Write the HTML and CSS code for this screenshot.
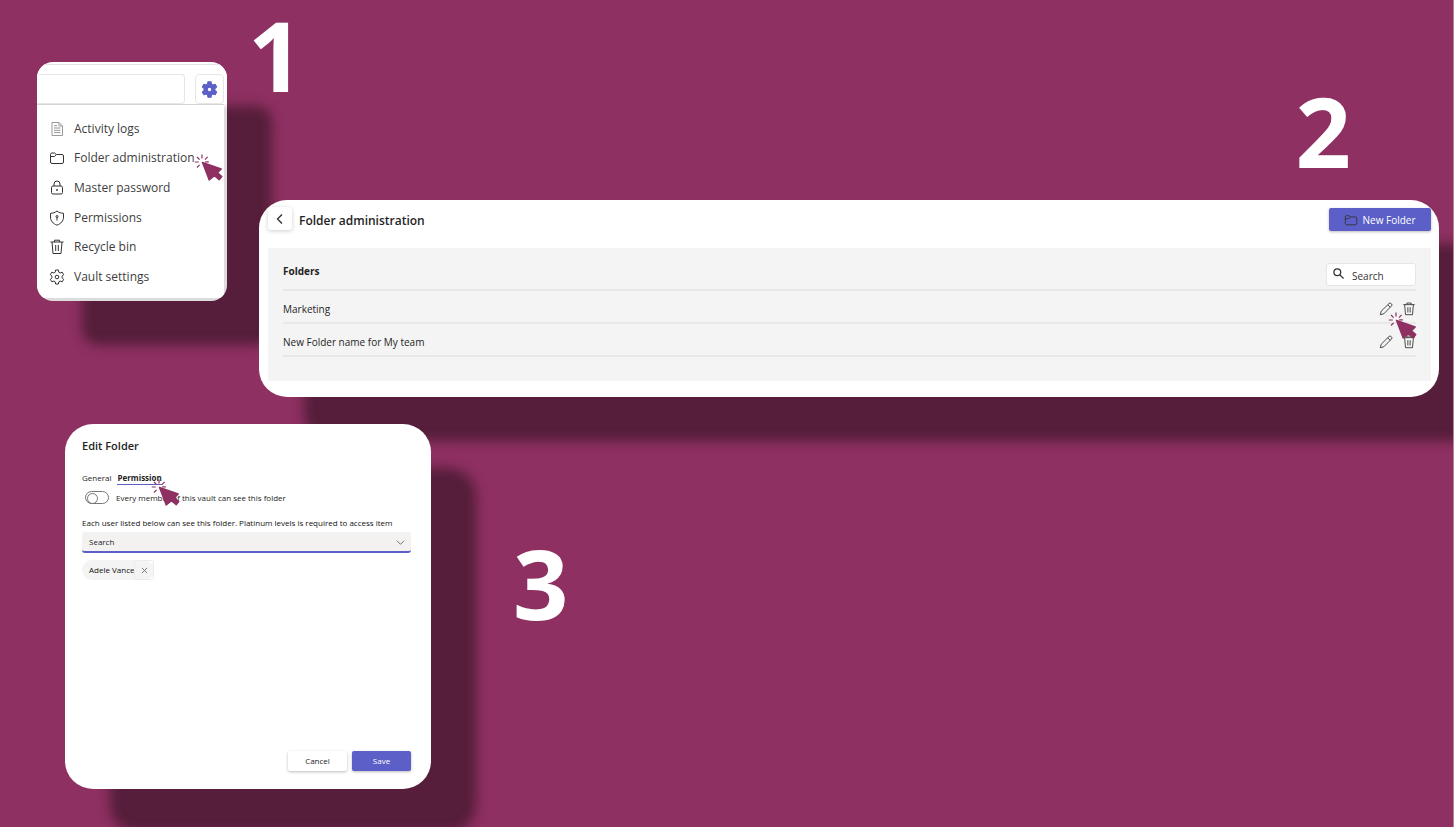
FILE: index.html
```html
<!DOCTYPE html>
<html lang="en">
<head>
<meta charset="utf-8">
<title>Folder administration</title>
<link rel="stylesheet" href="styles.css">
</head>
<body>
<svg class="sprite" aria-hidden="true">
  <symbol id="cursor" viewBox="0 0 30 30">
    <path d="M8 .5v4M3 3l2.600 2.600M.8 8h4M3 13.500l2.600-2.600M13.600 2.800 11 5.600M11.200 7.800h3.600" fill="none" stroke="#8e3062" stroke-width="1.200"/>
    <path d="M8.500 8.500 27.200 15 23.500 18.700 27.800 22.600 25.200 25.800 20.500 21.800 15.200 26Z" fill="#8e3062" stroke="#8e3062" stroke-width="1.400" stroke-linejoin="round"/>
  </symbol>
  <symbol id="folder" viewBox="0 0 16 16">
    <path d="M1.500 4.500A1.500 1.500 0 0 1 3 3h2.600l1.700 1.500h5.700A1.500 1.500 0 0 1 14.500 6v6a1.500 1.500 0 0 1-1.500 1.500H3A1.500 1.500 0 0 1 1.500 12ZM1.500 6.500h4l1.800-2"/>
  </symbol>
  <symbol id="trash" viewBox="0 0 16 16">
    <path d="M1.500 3h13M3 3l1 11.500h8L13 3M5.500 3V1.200h5V3M6.700 6v6M9.300 6v6"/>
  </symbol>
  <symbol id="pencil" viewBox="0 0 16 16">
    <path d="M1.500 14.500l1-4L11.500 1.700a1.600 1.600 0 0 1 2.300 0l.5.500a1.600 1.600 0 0 1 0 2.300L5.500 13.500ZM10 3.200l2.800 2.800"/>
  </symbol>
</svg>
<main class="poster">
  <section class="top">
    <div class="card menu-card">
      <div class="toolbar">
        <input class="toolbar-field" type="text" aria-label="Find">
        <button class="gear" type="button" aria-label="Settings">
          <svg viewBox="0 0 16 16"><path fill="#5b5fc7" stroke="#5b5fc7" stroke-width="1" stroke-linejoin="round" fill-rule="evenodd" d="M6.500.800h3l.4 2.200 1.300.8 2.100-.8 1.500 2.600-1.700 1.500v1.800l1.700 1.500-1.500 2.600-2.100-.8-1.300.8-.4 2.200h-3L6.100 13l-1.300-.8-2.100.8-1.500-2.600 1.700-1.500V7.100L1.200 5.600 2.700 3l2.100.8L6.100 3ZM8 5.900a2.100 2.100 0 1 0 0 4.200 2.100 2.100 0 0 0 0-4.200Z"/></svg>
        </button>
      </div>
      <ul class="menu">
        <li><a href="#logs"><svg class="icon faint" viewBox="0 0 16 16"><path d="M3 1.500h7l3.500 3.500v9.500H3ZM10 1.500V5h3.500M5 7h6.500M5 9.300h6.500M5 11.600h6.500M5 4.700h3"/></svg>Activity logs</a></li>
        <li><a href="#folders"><svg class="icon"><use href="#folder"/></svg>Folder administration</a><svg class="cursor"><use href="#cursor"/></svg></li>
        <li><a href="#password"><svg class="icon" viewBox="0 0 16 16"><path d="M4 6h8a1.500 1.500 0 0 1 1.500 1.500v5A1.500 1.500 0 0 1 12 14H4a1.500 1.500 0 0 1-1.500-1.500v-5A1.500 1.500 0 0 1 4 6ZM5 6V4a3 3 0 0 1 6 0v2"/><circle cx="8" cy="10" r=".6"/></svg>Master password</a></li>
        <li><a href="#permissions"><svg class="icon" viewBox="0 0 16 16"><path d="M8 1C6 2.600 4 3.200 1.500 3.300V7c0 4 2.500 6.600 6.500 8.200 4-1.600 6.500-4.200 6.500-8.200V3.300C12 3.200 10 2.600 8 1ZM8 7v3.500"/><circle cx="8" cy="6.500" r="1"/></svg>Permissions</a></li>
        <li><a href="#bin"><svg class="icon"><use href="#trash"/></svg>Recycle bin</a></li>
        <li><a href="#settings"><svg class="icon" viewBox="0 0 16 16"><path d="M6.600 1h2.800l.4 2.200 1.300.8 2.100-.8 1.500 2.500L13 7.200v1.600l1.700 1.500-1.500 2.500-2.100-.8-1.300.8-.4 2.200H6.600l-.4-2.200-1.300-.8-2.100.8-1.500-2.500L3 8.800V7.200L1.300 5.700l1.500-2.500 2.100.8 1.300-.8Z"/><circle cx="8" cy="8" r="1.800"/></svg>Vault settings</a></li>
      </ul>
    </div>
    <div class="top-right">
      <div class="numbers"><span class="number">1</span><span class="number second">2</span></div>
      <div class="card folder-card">
        <header class="folder-head">
          <button class="back" type="button" aria-label="Back"><svg viewBox="0 0 12 12"><path d="M8 1.500 3.500 6 8 10.500"/></svg></button>
          <h1>Folder administration</h1>
          <button class="btn primary new-folder" type="button"><svg><use href="#folder"/></svg>New Folder</button>
        </header>
        <div class="folder-body">
          <div class="list-head">
            <h2>Folders</h2>
            <label class="search"><svg viewBox="0 0 12 12"><circle cx="4.700" cy="4.700" r="3.700"/><path d="m7.500 7.500 4 4"/></svg><input type="text" placeholder="Search" aria-label="Search"></label>
          </div>
          <table>
            <tbody>
              <tr><td>Marketing</td><td class="actions"><div class="tools"><button type="button" aria-label="Edit Marketing"><svg><use href="#pencil"/></svg></button><button type="button" aria-label="Delete Marketing"><svg><use href="#trash"/></svg></button><svg class="cursor"><use href="#cursor"/></svg></div></td></tr>
              <tr><td>New Folder name for My team</td><td class="actions"><div class="tools"><button type="button" aria-label="Edit folder"><svg><use href="#pencil"/></svg></button><button type="button" aria-label="Delete folder"><svg><use href="#trash"/></svg></button></div></td></tr>
            </tbody>
          </table>
        </div>
      </div>
    </div>
  </section>
  <section class="bottom">
    <form class="card edit-card">
      <h2>Edit Folder</h2>
      <nav class="tabs"><a href="#general">General</a><a class="active" href="#permission">Permission</a><svg class="cursor"><use href="#cursor"/></svg></nav>
      <label class="toggle"><input type="checkbox">Every member of this vault can see this folder</label>
      <label class="hint" for="user">Each user listed below can see this folder. Platinum levels is required to access item</label>
      <div class="select">
        <select id="user"><option>Search</option></select>
        <svg viewBox="0 0 10 10"><path d="M1 3l4 4 4-4"/></svg>
      </div>
      <div class="chip">Adele Vance<button type="button" aria-label="Remove Adele Vance"><svg viewBox="0 0 8 8"><path d="m1 1 6 6M7 1 1 7"/></svg></button></div>
      <div class="footer"><button class="btn" type="button">Cancel</button><button class="btn primary" type="button">Save</button></div>
    </form>
    <span class="number">3</span>
  </section>
</main>
</body>
</html>
```
FILE: styles.css
```css
* { box-sizing: border-box; }
body {
  margin: 0;
  background: #8e3062;
  color: #242424;
  font-family: "Open Sans", "Noto Sans", sans-serif;
}
h1, h2, ul { margin: 0; padding: 0; }
ul { list-style: none; }
a { color: inherit; text-decoration: none; }
button, input, select { font: inherit; color: inherit; margin: 0; padding: 0; border: 0; }
svg { fill: none; stroke: #333; stroke-width: 1; flex: none; }
.sprite { display: none; }

.poster {
  min-height: 100vh;
  border-right: 1px solid #b983a0;
  overflow: hidden;
}
.card {
  background: #fff;
  border-radius: 28px;
  box-shadow: 45px 44px 12px #561e3a;
}
.number {
  color: #fff;
  font-size: 97px;
  font-weight: 700;
  line-height: 98px;
}
.cursor {
  position: absolute;
  width: 30px;
  height: 30px;
  pointer-events: none;
  z-index: 2;
}

/* Step 1 */
.top { display: flex; align-items: flex-start; padding: 0 14px 0 37px; }
.menu-card {
  width: 190px;
  margin-top: 62px;
  padding: 2px 3px 3px 0;
  border-radius: 16px;
  overflow: hidden;
  background: linear-gradient(#fff 40px, #dcdcdc 48px);
}
.toolbar {
  display: flex;
  gap: 10px;
  margin-right: -3px;
  padding: 9px 3px 0 0;
  border-top: 1px solid #e4e4e4;
  background: #fff;
}
.toolbar-field {
  flex: 1;
  min-width: 0;
  height: 30px;
  border: 1px solid #e6e6e6;
  border-left: 0;
  border-radius: 0 4px 4px 0;
}
.gear {
  display: grid;
  place-items: center;
  width: 29px;
  height: 30px;
  background: #fff;
  border: 1px solid #e6e6e6;
  border-radius: 4px;
}
.gear svg { width: 17px; height: 17px; }
.menu {
  display: grid;
  grid-auto-rows: 1fr;
  min-height: 194px;
  padding: 9px 0 6px 12px;
  background: #fff;
  border-top: 1px solid #d4d4d4;
  color: #3d3d3d;
  font-size: 12px;
  line-height: 16px;
}
.menu li { position: relative; display: flex; align-items: center; }
.menu a { display: flex; align-items: center; gap: 9px; white-space: nowrap; }
.icon { width: 16px; height: 16px; }
.faint { stroke: #999; }
.menu .cursor { left: 145px; top: 10px; }

/* Step 2 */
.top-right { flex: 1; min-width: 0; margin-left: 21px; }
.numbers { display: flex; justify-content: space-between; padding: 5px 88px 21px 0; }
.number.second { margin-top: 76px; }
.folder-card { margin-left: 11px; padding: 7px 8px 16px 9px; }
.folder-head { display: flex; align-items: flex-start; padding-bottom: 17px; }
.back {
  display: grid;
  place-items: center;
  width: 24px;
  height: 23px;
  background: #fff;
  border-radius: 3px;
  box-shadow: 0 1px 4px #0003;
}
.back svg { width: 12px; height: 12px; stroke-width: 1.4; }
.folder-head h1 { flex: 1; margin: 4px 0 0 7px; font-size: 12px; font-weight: 600; line-height: 20px; }
.btn {
  height: 20px;
  width: 59px;
  background: #fff;
  border-radius: 2px;
  box-shadow: 0 1px 3px #0004;
  font-size: 8px;
}
.primary { background: #5b5fc7; color: #fff; }
.new-folder {
  display: flex;
  align-items: center;
  justify-content: center;
  gap: 4px;
  width: 102px;
  height: 23px;
  margin-top: 1px;
  font-size: 10px;
}
.new-folder svg { width: 14px; height: 14px; }
.folder-body { padding: 15px 15px 24px; background: #f4f4f4; font-size: 10px; }
.list-head {
  display: flex;
  justify-content: space-between;
  align-items: flex-start;
  padding-bottom: 3px;
  border-bottom: 2px solid #e8e8e8;
}
.list-head h2 { font-size: 10px; line-height: 16px; }
.search {
  display: flex;
  width: 90px;
  height: 23px;
  padding: 4px 6px;
  gap: 8px;
  background: #fff;
  border: 1px solid #e6e6e6;
  border-radius: 3px;
}
.search svg { width: 11px; height: 11px; stroke-width: 1.4; }
.search input { width: 50px; height: 16px; background: none; outline: 0; }
.search input::placeholder { color: #333; opacity: 1; }
table { width: 100%; border-collapse: separate; border-spacing: 0; }
td { height: 33px; padding: 4px 0 0; border-bottom: 2px solid #e8e8e8; }
.actions { width: 40px; }
.tools { position: relative; display: flex; justify-content: flex-end; gap: 9px; }
.tools button { display: grid; background: none; }
.tools button svg { width: 14px; height: 14px; }
.tools .cursor { left: 12px; top: 10px; }

/* Step 3 */
.bottom { display: flex; align-items: flex-start; padding: 27px 0 0 65px; }
.edit-card {
  display: flex;
  flex-direction: column;
  align-items: flex-start;
  width: 366px;
  min-height: 365px;
  padding: 14px 20px 18px 17px;
  font-size: 8px;
  line-height: 12px;
}
.edit-card h2 { font-size: 11px; font-weight: 600; line-height: 16px; }
.tabs { position: relative; display: flex; gap: 6px; margin-top: 18px; }
.active { font-weight: 700; border-bottom: 1px solid #5b5fc7; }
.tabs .cursor { left: 69px; top: 7px; }
.toggle { display: flex; align-items: center; gap: 7px; margin: 6px 0 0 3px; }
.toggle input {
  appearance: none;
  display: flex;
  width: 24px;
  height: 13px;
  border: 1px solid #777;
  border-radius: 7px;
}
.toggle input::before {
  content: "";
  width: 9px;
  height: 9px;
  margin: 1px;
  border: 1px solid #777;
  border-radius: 50%;
}
.hint { margin: 13px 0 3px; color: #111; white-space: nowrap; }
.select { display: grid; align-items: center; width: 100%; }
.select > * { grid-area: 1 / 1; }
.select select {
  appearance: none;
  width: 100%;
  height: 21px;
  padding: 0 7px;
  background: #f3f2f1;
  border-bottom: 2px solid #5b5fc7;
  border-radius: 3px;
}
.select svg { justify-self: end; width: 9px; height: 9px; margin-right: 6px; stroke: #666; pointer-events: none; }
.chip {
  display: flex;
  align-items: center;
  height: 20px;
  margin-top: 7px;
  padding-left: 7px;
  background: #f4f4f4;
  border-radius: 10px;
  color: #111;
}
.chip button {
  display: grid;
  place-items: center;
  width: 20px;
  height: 20px;
  background: none;
  border: 1px solid #ececec;
  border-radius: 3px;
}
.chip svg { width: 7px; height: 7px; stroke: #666; }
.footer { display: flex; align-self: flex-end; gap: 5px; margin-top: auto; }
.bottom .number { margin: 109px 0 0 82px; }
```
